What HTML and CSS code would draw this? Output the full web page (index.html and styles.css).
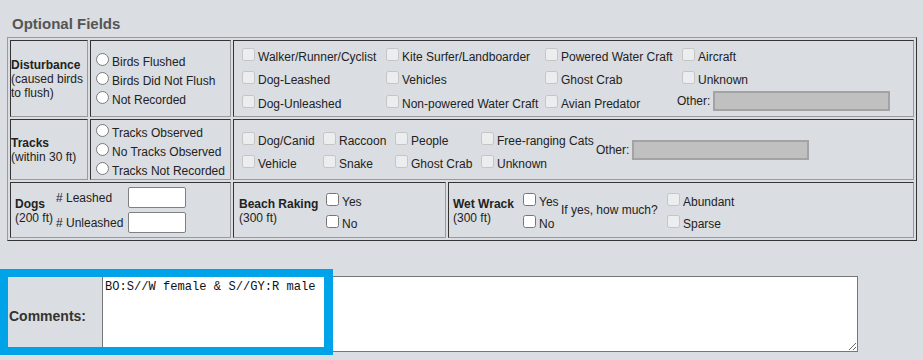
FILE: index.html
```html
<!DOCTYPE html>
<html lang="en">
<head>
<meta charset="utf-8">
<title>Optional Fields</title>
<link rel="stylesheet" href="styles.css">
</head>
<body>
<div class="page">
  <h2 class="section-title">Optional Fields</h2>

  <div class="opt-table">
    <!-- Row 1: Disturbance -->
    <div class="cell label-cell">
      <div><strong>Disturbance</strong><br>(caused birds to flush)</div>
    </div>
    <div class="cell radio-cell">
      <div class="radio-list">
        <label class="radio-line"><input type="radio" name="dist">Birds Flushed</label>
        <label class="radio-line"><input type="radio" name="dist">Birds Did Not Flush</label>
        <label class="radio-line"><input type="radio" name="dist">Not Recorded</label>
      </div>
    </div>
    <div class="cell span2 dist-cell">
      <div class="cb-grid dist-grid">
        <label class="opt"><input type="checkbox" disabled>Walker/Runner/Cyclist</label>
        <label class="opt"><input type="checkbox" disabled>Kite Surfer/Landboarder</label>
        <label class="opt"><input type="checkbox" disabled>Powered Water Craft</label>
        <label class="opt"><input type="checkbox" disabled>Aircraft</label>
        <label class="opt"><input type="checkbox" disabled>Dog-Leashed</label>
        <label class="opt"><input type="checkbox" disabled>Vehicles</label>
        <label class="opt"><input type="checkbox" disabled>Ghost Crab</label>
        <label class="opt"><input type="checkbox" disabled>Unknown</label>
        <label class="opt"><input type="checkbox" disabled>Dog-Unleashed</label>
        <label class="opt"><input type="checkbox" disabled>Non-powered Water Craft</label>
        <label class="opt"><input type="checkbox" disabled>Avian Predator</label>
        <div class="other dist-other"><span>Other:</span><input class="other-input" type="text" disabled></div>
      </div>
    </div>

    <!-- Row 2: Tracks -->
    <div class="cell label-cell">
      <div><strong>Tracks</strong><br>(within 30 ft)</div>
    </div>
    <div class="cell radio-cell">
      <div class="radio-list">
        <label class="radio-line"><input type="radio" name="tracks">Tracks Observed</label>
        <label class="radio-line"><input type="radio" name="tracks">No Tracks Observed</label>
        <label class="radio-line"><input type="radio" name="tracks">Tracks Not Recorded</label>
      </div>
    </div>
    <div class="cell span2 tracks-cell">
      <div class="cb-grid tracks-grid">
        <label class="opt"><input type="checkbox" disabled>Dog/Canid</label>
        <label class="opt"><input type="checkbox" disabled>Raccoon</label>
        <label class="opt"><input type="checkbox" disabled>People</label>
        <label class="opt"><input type="checkbox" disabled>Free-ranging Cats</label>
        <div class="other tracks-other"><span>Other:</span><input class="other-input" type="text" disabled></div>
        <label class="opt"><input type="checkbox" disabled>Vehicle</label>
        <label class="opt"><input type="checkbox" disabled>Snake</label>
        <label class="opt"><input type="checkbox" disabled>Ghost Crab</label>
        <label class="opt"><input type="checkbox" disabled>Unknown</label>
      </div>
    </div>

    <!-- Row 3 -->
    <div class="cell span2 dogs-cell">
      <div class="dogs-grid">
        <div class="dogs-title"><strong>Dogs</strong><br>(200 ft)</div>
        <span class="dogs-label"># Leashed</span>
        <input class="num-input" type="text">
        <span class="dogs-label"># Unleashed</span>
        <input class="num-input" type="text">
      </div>
    </div>
    <div class="cell beach-cell">
      <div class="beach-title"><strong>Beach Raking</strong><br>(300 ft)</div>
      <div class="yn">
        <label class="opt"><input type="checkbox">Yes</label>
        <label class="opt"><input type="checkbox">No</label>
      </div>
    </div>
    <div class="cell wrack-cell">
      <div class="wrack-title"><strong>Wet Wrack</strong><br>(300 ft)</div>
      <div class="yn wrack-yn">
        <label class="opt"><input type="checkbox">Yes</label>
        <label class="opt"><input type="checkbox">No</label>
      </div>
      <div class="how">If yes, how much?</div>
      <div class="yn">
        <label class="opt"><input type="checkbox" disabled>Abundant</label>
        <label class="opt"><input type="checkbox" disabled>Sparse</label>
      </div>
    </div>
  </div>

  <div class="comments">
    <div class="comments-label">Comments:</div>
    <textarea class="comments-text">BO:S//W female &amp; S//GY:R male</textarea>
  </div>

  <div class="highlight"></div>
</div>
</body>
</html>
```

FILE: styles.css
```css
html, body {
  margin: 0;
  padding: 0;
  background: #dadde1;
}

body {
  font-family: "Liberation Sans", Arial, sans-serif;
  font-size: 12px;
  color: #222;
}

.page {
  position: relative;
  height: 360px;
  overflow: hidden;
}

.section-title {
  margin: 0 0 5px 0;
  padding: 15px 0 0 12px;
  font-size: 15px;
  line-height: 17px;
  font-weight: bold;
  color: #555;
}

.opt-table {
  display: grid;
  grid-template-columns: 78px 141px 213px 466px;
  grid-template-rows: 77px 61px 56px;
  gap: 2px;
  padding: 2px;
  margin-left: 7px;
  width: max-content;
  border: 1px solid;
  border-color: #9a9a9a #333 #333 #9a9a9a;
}

.cell {
  box-sizing: border-box;
  border: 1px solid;
  border-color: #333 #9a9a9a #9a9a9a #333;
  display: flex;
  align-items: center;
  min-width: 0;
}

.span2 {
  grid-column: span 2;
}

.label-cell {
  padding: 0;
}

.radio-list {
  display: flex;
  flex-direction: column;
}

.radio-line {
  display: block;
  white-space: nowrap;
}

.radio-line input {
  margin: 3px 3px 0 5px;
}

.opt {
  display: block;
  white-space: nowrap;
}

.opt input {
  margin: 3px 3px 3px 4px;
}

.cb-grid {
  display: grid;
  align-items: start;
  margin-left: 4px;
}

.dist-grid {
  grid-template-columns: 144px 159px 137px auto;
  grid-template-rows: 23px 24px 20px;
}

.other {
  display: flex;
  align-items: center;
  gap: 3px;
  white-space: nowrap;
}

.dist-other {
  margin: -1px 0 0 -1px;
}

.other-input {
  box-sizing: border-box;
  width: 177px;
  height: 20px;
  margin: 0;
  padding: 0;
  border: 2px solid #a3a3a3;
  background: #c0c0c0;
}

.tracks-cell {
  align-items: flex-start;
  padding-top: 9px;
}

.tracks-grid {
  grid-template-columns: 81px 72px 86px 119px auto;
  grid-template-rows: 23px 20px;
}

.tracks-other {
  grid-column: 5;
  grid-row: 1 / span 2;
  align-self: center;
  margin-top: -2px;
}

.dogs-cell {
  padding-left: 4px;
}

.dogs-grid {
  display: grid;
  grid-template-columns: 41px 72px 58px;
  grid-template-rows: 21px 21px;
  row-gap: 4px;
  align-items: center;
}

.dogs-title {
  grid-row: 1 / span 2;
  padding-top: 2px;
}

.dogs-label {
  white-space: nowrap;
  padding-top: 1px;
}

.num-input {
  box-sizing: border-box;
  width: 58px;
  height: 21px;
  margin: 0;
  padding: 1px 2px;
  border: 1px solid #808080;
  border-radius: 2px;
  background: #fff;
}

.beach-cell {
  padding-left: 5px;
}

.wrack-cell {
  padding-left: 4px;
}

.beach-title {
  width: 83px;
  flex: none;
  padding-top: 2px;
}

.wrack-title {
  width: 66px;
  flex: none;
  padding-top: 2px;
}

.yn {
  align-self: flex-start;
  margin-top: 7px;
  display: flex;
  flex-direction: column;
  gap: 3px;
}

.wrack-yn {
  width: 42px;
  flex: none;
}

.how {
  width: 102px;
  flex: none;
  white-space: nowrap;
}

.comments {
  display: flex;
  align-items: flex-start;
  margin: 35px 0 0 8px;
  height: 79px;
}

.comments-label {
  box-sizing: border-box;
  width: 94px;
  height: 79px;
  display: flex;
  align-items: center;
  padding-left: 1px;
  font-size: 14px;
  font-weight: bold;
  color: #333;
}

.comments-text {
  box-sizing: border-box;
  width: 756px;
  height: 76px;
  margin: 0;
  padding: 3px 2px;
  border: 1px solid #767676;
  background: #fff;
  font-family: "Liberation Mono", "Courier New", monospace;
  font-size: 12.1px;
  color: #111;
  resize: both;
}

.highlight {
  position: absolute;
  left: 0;
  top: 269px;
  width: 333px;
  height: 86px;
  box-sizing: border-box;
  border: 8px solid #00a2e8;
  border-right-width: 9px;
  pointer-events: none;
}
```
